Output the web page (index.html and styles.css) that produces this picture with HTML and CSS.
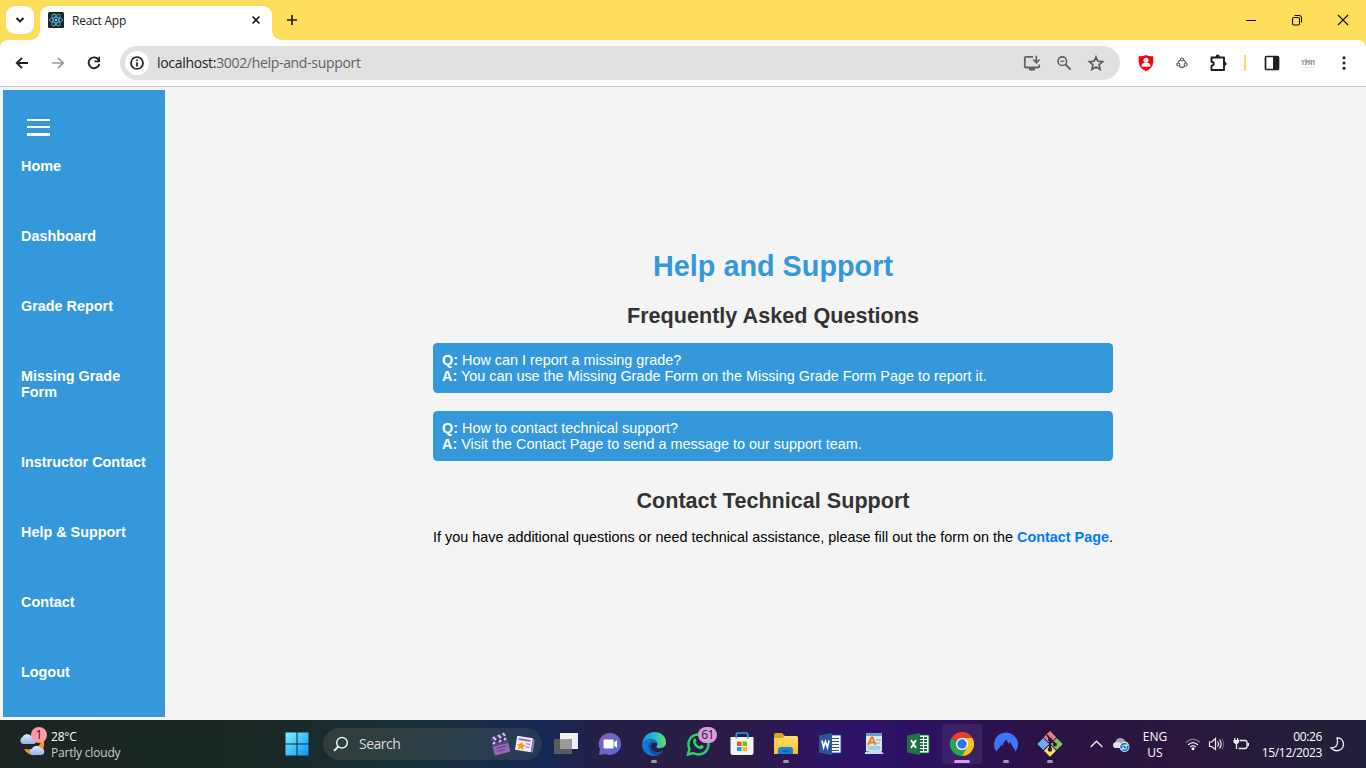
FILE: index.html
```html
<!DOCTYPE html>
<html lang="en">
<head>
<meta charset="utf-8">
<title>React App</title>
<link rel="stylesheet" href="styles.css">
</head>
<body>
<header class="tabstrip">
  <div class="tab-search"><svg width="10" height="8" viewBox="0 0 10 8"><path d="M1.500 2l3.500 3.500L8.500 2" fill="none" stroke="#1f1f1f" stroke-width="1.900"/></svg></div>
  <div class="tab">
    <svg class="favicon" width="16" height="16" viewBox="0 0 16 16"><rect width="16" height="16" rx="1.500" fill="#20232a"/><g fill="none" stroke="#4fb3cc" stroke-width=".9"><ellipse cx="8" cy="8" rx="6.600" ry="2.600"/><ellipse cx="8" cy="8" rx="6.600" ry="2.600" transform="rotate(60 8 8)"/><ellipse cx="8" cy="8" rx="6.600" ry="2.600" transform="rotate(120 8 8)"/></g><circle cx="8" cy="8" r="1.300" fill="#61dafb"/></svg>
    <span class="tab-title">React App</span>
    <svg class="tab-close" width="10" height="10" viewBox="0 0 10 10"><path d="M1.500 1.500l7 7M8.500 1.500l-7 7" stroke="#1f1f1f" stroke-width="1.600"/></svg>
  </div>
  <svg class="new-tab" width="12" height="12" viewBox="0 0 12 12"><path d="M6 1v10M1 6h10" stroke="#1f1f1f" stroke-width="1.700"/></svg>
  <div class="window-controls">
    <svg width="12" height="12" viewBox="0 0 12 12"><path d="M1 6.500h10" stroke="#111"/></svg>
    <svg width="12" height="12" viewBox="0 0 12 12"><g fill="none" stroke="#111" stroke-width="1.100"><rect x="1.500" y="3.500" width="7" height="7.500" rx="1.500"/><path d="M3.500 1.500h4.500a2.500 2.500 0 0 1 2.500 2.500v4.500"/></g></svg>
    <svg width="12" height="12" viewBox="0 0 12 12"><path d="M1 1l10 10M11 1L1 11" stroke="#111" stroke-width="1.100"/></svg>
  </div>
</header>
<div class="toolbar-back">
<div class="toolbar">
  <span class="tool"><svg width="14" height="12" viewBox="0 0 14 12"><path d="M13 6H2M7 .8L1.800 6 7 11.200" fill="none" stroke="#1f1f1f" stroke-width="1.900"/></svg></span>
  <span class="tool"><svg width="14" height="12" viewBox="0 0 14 12"><path d="M1 6h11M7 .8L12.200 6 7 11.200" fill="none" stroke="#9c9c9c" stroke-width="1.700"/></svg></span>
  <span class="tool"><svg width="14" height="14" viewBox="0 0 14 14"><path d="M11.800 4.200A5.400 5.400 0 1 0 12.300 8" fill="none" stroke="#1f1f1f" stroke-width="1.900"/><path d="M13 .8v5.400H7.600V4.600h3.800V.8z" fill="#1f1f1f"/></svg></span>
  <div class="omnibox">
    <span class="site-info"><svg width="14" height="14" viewBox="0 0 14 14"><circle cx="7" cy="7" r="6" fill="none" stroke="#1f1f1f" stroke-width="1.700"/><path d="M7 3.400v1.600M7 6.200v4.400" stroke="#1f1f1f" stroke-width="1.700"/></svg></span>
    <span class="url"><b>localhost:</b>3002/help-and-support</span>
    <span class="box-tool"><svg width="18" height="16" viewBox="0 0 18 16"><path d="M10 1.800H3Q1.800 1.800 1.800 3v8.500q0 1 1.200 1h12q1.200 0 1.200-1V9.500" fill="none" stroke="#5f6368" stroke-width="1.800"/><path d="M6 13h6v2.500H6z" fill="#5f6368"/><path d="M13.300.8v6.500M10.200 4.500l3.100 3.200 3.200-3.200" fill="none" stroke="#5f6368" stroke-width="1.700"/></svg></span>
    <span class="box-tool"><svg width="16" height="16" viewBox="0 0 16 16"><g fill="none" stroke="#5f6368"><circle cx="6.300" cy="6.200" r="4.300" stroke-width="1.600"/><path d="M9.500 9.500l5.200 5.200" stroke-width="1.900"/><path d="M4.200 6.200h4.200" stroke-width="1.200"/></g></svg></span>
    <span class="box-tool"><svg width="18" height="16" viewBox="0 0 18 16"><path d="M9 2l1.900 4.200 4.700.5-3.500 3.100 1 4.600L9 12l-4.100 2.400 1-4.600-3.500-3.100 4.700-.5z" fill="none" stroke="#5f6368" stroke-width="1.800"/></svg></span>
  </div>
  <span class="tool"><svg width="16" height="16" viewBox="0 0 16 16"><path d="M8 0q3.200 1.600 7.300 1.300.6 5-.7 8.900Q13 14 8 16q-5-2-6.600-5.800Q.1 6.300.7 1.300 4.800 1.600 8 0z" fill="#f4060b"/><circle cx="8" cy="5.300" r="2.500" fill="#fff"/><path d="M3.600 10Q4.300 7.900 6.400 7.700h3.200q2.100.2 2.800 2.300v1.700H3.600z" fill="#fff"/></svg></span>
  <span class="tool"><svg width="12" height="12" viewBox="0 0 12 12"><g fill="none" stroke="#5d5d5d" stroke-width="1.200"><circle cx="6" cy="2.500" r="1.500"/><circle cx="2.300" cy="7.500" r="1.500"/><circle cx="9.700" cy="7.500" r="1.500"/><path d="M4.400 3Q2.500 3.800 2.200 6M7.600 3q1.900.8 2.200 3M3.300 9.300q2.700 2.400 5.400 0"/></g></svg></span>
  <span class="tool"><svg width="18" height="18" viewBox="0 0 18 18"><path d="M2.500 3.500H15V16H2.500v-4.200q2.200-.3 2.200-2t-2.200-2z" fill="none" stroke="#1f1f1f" stroke-width="1.900" stroke-linejoin="round"/><path d="M6.700 3.500v-1a2 2 0 0 1 4 0v1zM15 7.700h.5a2 2 0 0 1 0 4.200H15z" fill="#1f1f1f"/></svg></span>
  <span class="tool-divider"></span>
  <span class="tool"><svg width="16" height="16" viewBox="0 0 16 16"><rect x="1.500" y="1.500" width="13" height="13" rx="1" fill="none" stroke="#1f1f1f" stroke-width="1.700"/><path d="M9 1.500h5.500v13H9z" fill="#1f1f1f"/></svg></span>
  <span class="tool"><svg width="14" height="14" viewBox="0 0 14 14"><path d="M0 5h13M2 5v4M5 3v6M4 9l3-4M8 4v5M8 7h2M10.500 4v5M13 4v5" fill="none" stroke="#999" stroke-width="1.200"/><path d="M1 11.500h12" stroke="#e8e8e8"/></svg></span>
  <span class="tool"><svg width="4" height="16" viewBox="0 0 4 16"><g fill="#1f1f1f"><circle cx="2" cy="2.700" r="1.500"/><circle cx="2" cy="8" r="1.500"/><circle cx="2" cy="13.300" r="1.500"/></g></svg></span>
</div>
</div>
<div class="page">
  <nav class="sidebar">
    <div class="menu-icon"><i></i><i></i><i></i></div>
    <a>Home</a><a>Dashboard</a><a>Grade Report</a><a>Missing Grade Form</a><a>Instructor Contact</a><a>Help &amp; Support</a><a>Contact</a><a>Logout</a>
  </nav>
  <main class="content">
    <section class="help">
      <h1>Help and Support</h1>
      <h2>Frequently Asked Questions</h2>
      <div class="faq"><b>Q:</b> How can I report a missing grade?<br><b>A:</b> You can use the Missing Grade Form on the Missing Grade Form Page to report it.</div>
      <div class="faq"><b>Q:</b> How to contact technical support?<br><b>A:</b> Visit the Contact Page to send a message to our support team.</div>
      <h2 class="contact-title">Contact Technical Support</h2>
      <p>If you have additional questions or need technical assistance, please fill out the form on the <a>Contact Page</a>.</p>
    </section>
  </main>
</div>
<footer class="taskbar">
  <svg width="0" height="0" class="defs"><defs>
    <linearGradient id="win" x2="297" y2="24" x1="0" y1="0" gradientUnits="objectBoundingBox"><stop stop-color="#7af4ff"/></linearGradient>
    <linearGradient id="start" x2="1" y2="1"><stop stop-color="#7af4ff"/><stop offset="1" stop-color="#0794f8"/></linearGradient>
    <linearGradient id="chat" x2="1" y2="1"><stop stop-color="#8c5bb0"/><stop offset="1" stop-color="#506cdc"/></linearGradient>
    <linearGradient id="edge" x2="1"><stop stop-color="#1795d8"/><stop offset=".55" stop-color="#28bcd0"/><stop offset="1" stop-color="#66df55"/></linearGradient>
    <linearGradient id="folder" y2="1" x2="0"><stop stop-color="#ffe071"/><stop offset="1" stop-color="#f9bd22"/></linearGradient>
    <linearGradient id="cloud" y2="1" x2="0"><stop stop-color="#e1edfd"/><stop offset="1" stop-color="#8fb2ee"/></linearGradient>
  </defs></svg>
  <div class="weather">
    <svg width="32" height="32" viewBox="0 0 32 32"><path d="M22 7c2 9-5 15-17 13q4 7 12 6c8-2 11-13 5-19z" fill="#f49b20"/><path d="M4 15a4 3.800 0 0 1-.4-7A5 5 0 0 1 12 7a4 4 0 0 1 3 8z" fill="url(#cloud)"/><path d="M13 26a3.500 3.500 0 0 1 0-6.500 5 5 0 0 1 8.500-.5 3.500 3.500 0 0 1 .5 7z" fill="url(#cloud)"/></svg>
    <span class="alert">1</span>
    <div class="weather-text"><span>28°C</span><span class="dim">Partly cloudy</span></div>
  </div>
  <div class="app start"><svg width="24" height="24" viewBox="0 0 24 24"><path d="M.5.500h11v11H.5zM12.500.500h11v11h-11zM.5 12.500h11v11H.5zM12.500 12.500h11v11h-11z" fill="url(#start)"/></svg></div>
  <div class="search">
    <svg width="16" height="16" viewBox="0 0 16 16"><circle cx="9" cy="6.800" r="5.300" fill="none" stroke="#eee" stroke-width="1.500"/><path d="M5.300 10.500L1 14.800" stroke="#eee" stroke-width="1.900"/></svg>
    <span>Search</span>
    <svg class="highlights" width="46" height="24" viewBox="0 0 46 24"><g transform="rotate(-14 11 15)"><path d="M4 10h16v12H4z" fill="#9468b5"/><path d="M4 10h16v3H4z" fill="#56407f"/><path d="M7 15.500h10M7 18.500h8" stroke="#5a397f"/></g><path d="M1 6l14-5.500 2 3L3 10z" fill="#51407a"/><path d="M4 5l3 3M9 3l3 3M14 1l2 3M4 12l2-2M10 10l2-2M15 8l2-2" stroke="#d4c6ef" stroke-width="2"/><g transform="rotate(9 35 12)"><path d="M27 5h16v14H27z" fill="#efe9f8"/><path d="M29 7h12v2H29zM37 11h4v1h-4zM37 14h4v1h-4zM43 6h2v13h-2z" fill="#9871b5"/><path d="M32.500 10l1.400 2.600 3 .4-2.100 2 .5 3-2.800-1.400L29.700 18l.5-3-2.200-2 3-.4z" fill="#f59c16"/></g></svg>
  </div>
  <div class="app"><svg width="24" height="24" viewBox="0 0 24 24"><path d="M6 1h18v16H6z" fill="#f0f0f0"/><path d="M0 7h18v15H0z" fill="#5b5b5d"/><path d="M6 7h12v10H6z" fill="#9b9b9c"/></svg></div>
  <div class="app"><svg width="24" height="24" viewBox="0 0 24 24"><path d="M12.500 1a11 11 0 1 1-5 21L1 23l1-6A11 11 0 0 1 12.500 1z" fill="url(#chat)"/><rect x="5.500" y="7.500" width="10" height="9" rx="1.200" fill="#fff"/><path d="M16 10.500l3-2.500v8l-3-2.500z" fill="#fff"/></svg></div>
  <div class="app running"><svg width="24" height="24" viewBox="0 0 24 24"><path d="M.1 12.500C.5 5 6 0 12 0c8 0 12 5 12 10.500 0 4-3 5.700-6.500 5.700-3.200 0-3.500-1.200-2.600-2.700C16.500 10 13 7 9 7.200c-4.500.2-7.500 2.800-8.900 5.300z" fill="url(#edge)"/><path d="M0 12.300C2 8.800 5.500 7 9 7.200c3.300.2 5.800 2 6.200 4.200C12 9 8.500 11.500 9 15.500c.5 4.500 6.500 6.300 12.500 3.200C19.500 21.800 16 24 12 24 5 24 0 19 0 12.300z" fill="#1478cf"/><path d="M8.500 9.800C6.500 12 6 15 7.200 18c1.200 3 3.800 5.200 7 5.800 3.200-.6 5.800-2.400 7.300-5.100C15.500 21.800 9.500 20 9 15.500c-.3-2.500 1-4.700 2.700-5.400z" fill="#134f9c"/></svg></div>
  <div class="app whatsapp"><svg width="24" height="24" viewBox="0 0 24 24"><path d="M2 22.500l1.500-5.600A10 10 0 1 1 7.300 21z" fill="none" stroke="#25d366" stroke-width="2.500"/><path d="M8 6.500q1-.7 1.700.6l.8 2-1 1.500q1.300 2.500 4 3.600l1.500-1.500 2.600 1.300q.7 1-1 2.500C12 19 4.500 11.500 8 6.500z" fill="#25d366"/></svg><span class="badge">61</span></div>
  <div class="app"><svg width="24" height="24" viewBox="0 0 24 24"><path d="M.5 5h23v15.500Q23.500 23 21 23H3Q.5 23 .5 20.500z" fill="#f3f3f3"/><path d="M6.300 6.500V2.300Q6.300 1 7.800 1h8.400q1.500 0 1.500 1.300v4.200" fill="none" stroke="#16a8ed" stroke-width="1.700"/><path d="M7 9.500h4.500V14H7z" fill="#f25022"/><path d="M12.500 9.500H17V14h-4.500z" fill="#7fba00"/><path d="M7 15h4.500v4H7z" fill="#00a4ef"/><path d="M12.500 15H17v4h-4.500z" fill="#ffb900"/></svg></div>
  <div class="app running"><svg width="24" height="24" viewBox="0 0 24 24"><path d="M0 3q0-2 2-2h6l3 3h11q2 0 2 2v6H0z" fill="#dda315"/><path d="M0 6h8l3-2h11q2 0 2 2v16H0z" fill="url(#folder)"/><path d="M4 22v-4q0-3 3-3h9q3 0 3 3v4z" fill="#1683d7"/><path d="M8 19h7" stroke="#0863aa" stroke-width="1.500"/></svg></div>
  <div class="app"><svg width="24" height="24" viewBox="0 0 24 24"><path d="M12 3h11v18H12z" fill="#f7f9fd" stroke="#2b5797"/><path d="M13 6.500h8M13 9.500h8M13 12.500h8M13 15.500h8M13 18.500h8" stroke="#2b5797" stroke-width="1.200"/><path d="M1 3.500L14 1v22L1 20.500z" fill="#2b5797"/><path d="M4 8.500l1.600 7 1.900-6 1.900 6 1.600-7" fill="none" stroke="#fff" stroke-width="1.600"/></svg></div>
  <div class="app"><svg width="24" height="24" viewBox="0 0 24 24"><path d="M4 1h16v18H4z" fill="#d7eaf5"/><path d="M4 1h16v3H4z" fill="#6da1bb"/><path d="M5.500 15h13M5.500 17h13M14 8h5M14 11h4" stroke="#79aecd"/><path d="M6 13L9.500 5.500h1l3 7.500M7.500 10.500H13" fill="none" stroke="#ef7e22" stroke-width="2"/><path d="M3 20l14-3 5 5H3z" fill="#c1dced"/></svg></div>
  <div class="app"><svg width="24" height="24" viewBox="0 0 24 24"><path d="M12 3h11v18H12z" fill="#f7f9fd" stroke="#207245"/><path d="M14 6h7M14 9h7M14 12h7M14 15h7M14 18h7" stroke="#207245" stroke-width="1.900" stroke-dasharray="3 1"/><path d="M1 3.500L14 1v22L1 20.500z" fill="#207245"/><path d="M5 8l5 8M10 8l-5 8" stroke="#fff" stroke-width="1.800"/></svg></div>
  <div class="app running active"><svg width="24" height="24" viewBox="0 0 24 24"><path d="M12 12L1.600 6A12 12 0 0 1 22.400 6z" fill="#e93e31"/><path d="M1.600 6a12 12 0 0 0 10.400 18l5.200-9L12 12z" fill="#2da34d"/><path d="M12 6h10.400A12 12 0 0 1 12 24l5.200-9z" fill="#fcc31e"/><circle cx="12" cy="12" r="6" fill="#fff"/><circle cx="12" cy="12" r="4.700" fill="#2878e9"/></svg></div>
  <div class="app running"><svg width="24" height="24" viewBox="0 0 24 24"><path d="M2.300 19.500A12 12 0 1 1 21.700 19.500L16 10l-1.300 2L12 7.500 9 12l1 2-2-1.500z" fill="#3e75f8"/></svg></div>
  <div class="app running"><svg width="26" height="26" viewBox="0 0 26 26"><g transform="rotate(45 13 13)"><rect x="4" y="4" width="8.500" height="8.500" fill="#6caaf1"/><rect x="4" y="4" width="8.500" height="8.500" fill="#f57d82"/><rect x="13.500" y="4" width="8.500" height="8.500" fill="#80c35b"/><rect x="4" y="13.500" width="8.500" height="8.500" fill="#6caaf1"/><rect x="13.500" y="13.500" width="8.500" height="8.500" fill="#fae06f"/></g><path d="M10 4l3 4v11M13 8l5 5" fill="none" stroke="#2c1d2c" stroke-width="2"/><g fill="#2c1d2c"><circle cx="13" cy="8.500" r="2"/><circle cx="18" cy="13.500" r="2"/><circle cx="13" cy="18.500" r="2.200"/></g></svg></div>
  <div class="tray">
    <svg class="chevron" width="13" height="8" viewBox="0 0 13 8"><path d="M.7 7L6.500 1.200 12.300 7" fill="none" stroke="#eee" stroke-width="1.300"/></svg>
    <svg class="onedrive" width="17" height="15" viewBox="0 0 17 15"><path d="M2 11Q0 10 0 8t2.500-3Q3.500 1 7 1q4 0 5 3 3 .5 3.500 3l-1 4z" fill="#a9a4af"/><path d="M3 5q3-1 5 2l4 4H2Q0 10 0 8t3-3" fill="#e3e0e5"/><circle cx="11.500" cy="10" r="4.900" fill="#fff"/><circle cx="11.500" cy="10" r="4.300" fill="#1877c6"/><path d="M9 9.500q1.500-2.500 4.500-1M14 10.500q-1.500 2.500-4.500 1M14 7v2h-2M9 13v-2h2" fill="none" stroke="#fff"/></svg>
    <div class="language"><span>ENG</span><span>US</span></div>
    <svg class="wifi" width="16" height="14" viewBox="0 0 16 14"><g fill="none"><path d="M1 5.500q7-6.500 14 0" stroke="#736c7d" stroke-width="1.300"/><path d="M3 8q5-4.700 10 0M5.200 10q2.800-2.700 5.600 0" stroke="#f1f1f1" stroke-width="1.300"/></g><circle cx="8" cy="11.700" r="1.500" fill="#fff"/></svg>
    <svg class="volume" width="17" height="14" viewBox="0 0 17 14"><path d="M1.500 5h2.300L7.500 1.500v11L3.800 9.500H1.500zM9.500 4.500q2 2.500 0 5M11.500 2.500q3.200 4.500 0 9" fill="none" stroke="#eee" stroke-width="1.200"/><path d="M14 1.500q3.300 5.500 0 11" fill="none" stroke="#706678"/></svg>
    <svg class="battery" width="17" height="14" viewBox="0 0 17 14"><path d="M6.500 3.500H12q2 0 2 2v4q0 2-2 2H5.500" fill="none" stroke="#eee" stroke-width="1.300"/><path d="M14.500 6H16v3h-1.500zM.5 3H6v2.500L4.500 7h-2L.5 5.500zM1.300 1h1.200v2H1.300zM4 1h1.200v2H4z" fill="#fff"/><path d="M3.500 6v6" fill="none" stroke="#eee" stroke-width="1.200"/></svg>
    <div class="clock"><span>00:26</span><span>15/12/2023</span></div>
    <svg class="moon" width="15" height="15" viewBox="0 0 15 15"><path d="M7 1c6-.5 8.500 7 4.500 11Q6 16 1 11c4 0 8-2.500 6-10z" fill="none" stroke="#eee" stroke-width="1.300"/></svg>
  </div>
</footer>
</body>
</html>
```
FILE: styles.css
```css
* { box-sizing: border-box; }
svg { display: block; flex: none; }
body { margin: 0; width: 1366px; height: 768px; overflow: hidden; display: flex; flex-direction: column; background: #f4f4f4; font-family: "Liberation Sans", Arial, sans-serif; }

.tabstrip { height: 40px; background: #ffdd5d; display: flex; font-family: "Open Sans", "Noto Sans", sans-serif; }
.tab-search { width: 28px; height: 28px; margin: 6px 6px 0; border-radius: 9px; background: #fff; display: grid; place-items: center; }
.tab { position: relative; width: 232px; height: 34px; margin-top: 6px; padding: 0 11px 6px 8px; border-radius: 9px 9px 0 0; background: #fff; display: flex; align-items: center; }
.tab::before, .tab::after { content: ""; position: absolute; bottom: 0; width: 9px; height: 9px; }
.tab::before { left: -9px; background: radial-gradient(circle at 0 0, #ffdd5d 8.500px, #fff 9px); }
.tab::after { right: -9px; background: radial-gradient(circle at 100% 0, #ffdd5d 8.500px, #fff 9px); }
.tab-title { margin: 1px 0 0 8px; font-size: 12px; letter-spacing: -0.25px; color: #1f1f1f; }
.tab-close { margin-left: auto; }
.new-tab { margin: 14px 0 0 14px; }
.window-controls { margin: 14px 17px 0 auto; display: flex; gap: 34px; }

.toolbar-back { background: #ffdd5d; }
.toolbar { height: 47px; padding: 6px 4px 6px; border-bottom: 1px solid #c9c9c9; border-radius: 8px 8px 0 0; background: #fff; display: flex; }
.tool { width: 36px; height: 34px; display: grid; place-items: center; flex: none; }
.omnibox { width: 1000px; height: 34px; margin: 0 8px; padding: 0 8px 0 5px; border-radius: 17px; background: #e1e1e1; display: flex; align-items: center; flex: none; }
.site-info { width: 24px; height: 24px; border-radius: 50%; background: #fff; display: grid; place-items: center; }
.url { margin: 0 auto 0 8px; font: 14px/20px "Open Sans", "Noto Sans", sans-serif; letter-spacing: -0.32px; color: #5f6368; white-space: nowrap; }
.url b { font-weight: 400; color: #1f1f1f; }
.box-tool { width: 32px; display: grid; place-items: center; }
.tool-divider { width: 2px; height: 16px; margin: 9px 8px; background: #ffdd5d; flex: none; }

.page { height: 633px; padding: 3px; display: flex; }
.sidebar { width: 162px; padding: 29px 18px 0; background: #3498db; display: flex; flex-direction: column; flex: none; font-size: 14.400px; line-height: 16px; font-weight: 700; color: #fff; }
.sidebar a { margin-bottom: 54px; flex: none; white-space: nowrap; }
.sidebar a:nth-of-type(4) { white-space: normal; }
.sidebar a:last-child { margin-bottom: 0; }
.menu-icon { width: 23px; height: 17px; margin: 0 0 22px 6px; display: flex; flex: none; flex-direction: column; justify-content: space-between; }
.menu-icon i { height: 2px; background: #fff; }
.menu-icon i:last-child { height: 3px; }
.content { flex: 1; padding: 159px 0 0 18px; display: flex; justify-content: center; }
.help { width: 680px; font-size: 14.400px; line-height: 16px; color: #000; }
.help h1 { margin: 0 0 21px; font-size: 28.800px; line-height: 34px; color: #3498db; text-align: center; }
.help h2 { margin: 0 0 15px; font-size: 21.600px; line-height: 24px; color: #333; text-align: center; }
.help .contact-title { margin-top: 28px; margin-bottom: 16px; }
.help p { margin: 0; white-space: nowrap; text-align: center; }
.help p a { color: #007bff; font-weight: 700; }
.faq { height: 50px; padding: 9px; border-radius: 4.500px; background: #3498db; color: #fff; white-space: nowrap; }
.faq + .faq { margin-top: 18px; }

.taskbar { height: 48px; display: flex; background: linear-gradient(90deg, #1b2523 0, #1a2826 260px, #172f37 400px, #152855 545px, #241f48 600px, #2c1b47 740px, #2e126a 850px, #2d1260 930px, #2c1245 1040px, #2b183d 1180px, #21203a 1366px); font: 12px/16px "Open Sans", "Noto Sans", sans-serif; color: #fff; }
.defs { position: absolute; }
.weather { width: 275px; padding: 9px 0 0 19px; display: flex; position: relative; }
.alert { position: absolute; left: 31px; top: 7px; width: 16px; height: 16px; border-radius: 50%; background: #ff99a4; color: #222; text-align: center; }
.weather-text { display: flex; flex-direction: column; letter-spacing: -0.2px; }
.dim { color: #c9cdcc; }
.search { width: 219px; height: 32px; margin: 8px 2px 0 4px; padding: 0 7px 0 10px; border-radius: 16px; background: linear-gradient(90deg, #303d3b, #2c4049 60%, #263859); display: flex; align-items: center; font-size: 14px; letter-spacing: -0.5px; color: #d8dcde; }
.search span { margin-left: 10px; }
.highlights { margin-left: auto; }
.app { position: relative; width: 44px; height: 48px; display: grid; place-items: center; flex: none; }
.running::after { content: ""; position: absolute; left: 19px; bottom: 5px; width: 6px; height: 3px; border-radius: 2px; background: #a19aab; }
.active::before { content: ""; position: absolute; left: 2px; top: 4px; width: 40px; height: 40px; border-radius: 4px; background: #ffffff12; }
.active::after { left: 14px; width: 16px; background: #d99ce4; }
.active svg { position: relative; }
.badge { position: absolute; left: 22px; top: 7px; width: 19px; height: 16px; border-radius: 8px; background: #d99ce4; color: #222; text-align: center; letter-spacing: -0.5px; }
.tray { display: flex; align-items: center; flex: 1; }
.chevron { margin-left: 18px; }
.onedrive { margin-left: 10px; }
.language { width: 32px; margin: 2px 0 0 9px; display: flex; flex-direction: column; text-align: center; }
.wifi { margin-left: 14px; }
.volume { margin-left: 7px; }
.battery { margin-left: 8px; }
.clock { width: 76px; margin: 1px 0 0 -4px; display: flex; flex-direction: column; text-align: right; letter-spacing: -0.35px; }
.moon { margin-left: 8px; }
```
